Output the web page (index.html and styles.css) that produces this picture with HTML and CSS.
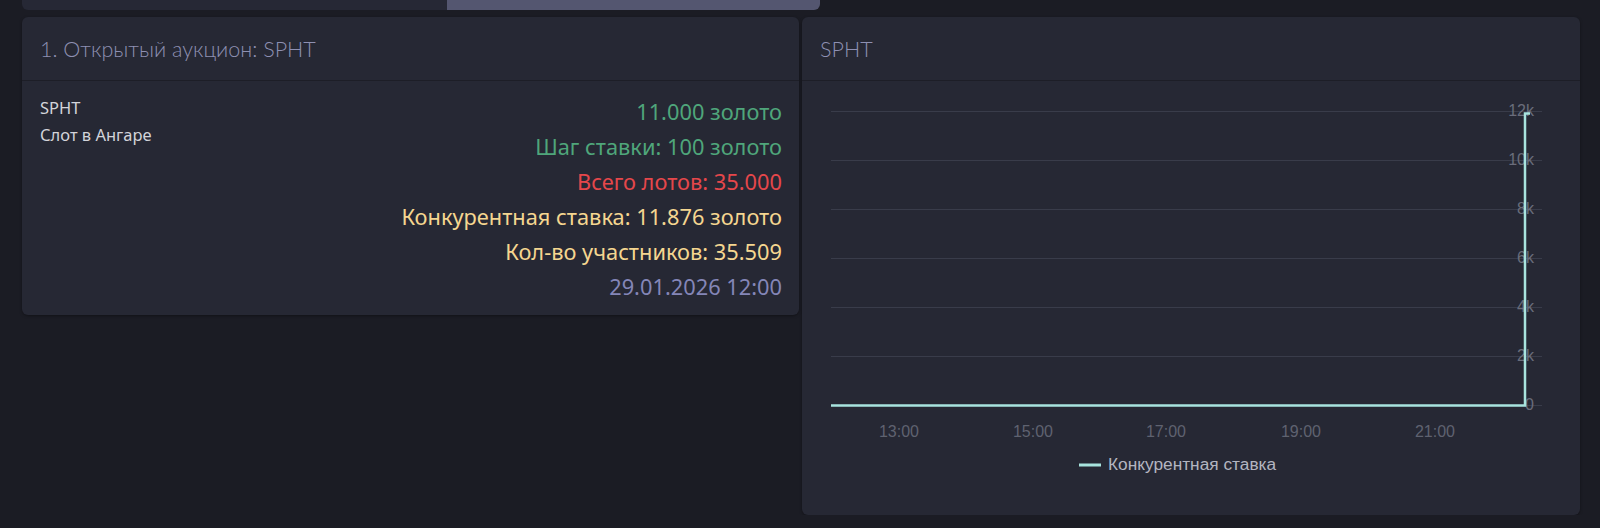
FILE: index.html
```html
<!DOCTYPE html>
<html lang="ru">
<head>
<meta charset="utf-8">
<title>Аукцион SPHT</title>
<link rel="stylesheet" href="styles.css">
</head>
<body>
<div class="page">
  <div class="topbar">
    <div class="topbar-seg topbar-seg-a"></div>
    <div class="topbar-seg topbar-seg-b"></div>
  </div>
  <div class="row">
    <section class="card card-lot">
      <header class="card-head">1. Открытый аукцион: SPHT</header>
      <div class="lot-body">
        <div class="lot-name">
          <div class="lot-code">SPHT</div>
          <div class="lot-desc">Слот в Ангаре</div>
        </div>
        <div class="lot-stats">
          <div class="stat stat-green">11.000 золото</div>
          <div class="stat stat-green">Шаг ставки: 100 золото</div>
          <div class="stat stat-red">Всего лотов: 35.000</div>
          <div class="stat stat-yellow">Конкурентная ставка: 11.876 золото</div>
          <div class="stat stat-yellow">Кол-во участников: 35.509</div>
          <div class="stat stat-date">29.01.2026 12:00</div>
        </div>
      </div>
    </section>
    <section class="card card-chart">
      <header class="card-head">SPHT</header>
      <div class="chart-body">
        <svg class="chart" width="778" height="434" viewBox="0 0 778 434">
          <g class="grid">
            <line x1="29" y1="30.5" x2="740" y2="30.5"/>
            <line x1="29" y1="79.5" x2="740" y2="79.5"/>
            <line x1="29" y1="128.5" x2="740" y2="128.5"/>
            <line x1="29" y1="177.5" x2="740" y2="177.5"/>
            <line x1="29" y1="226.5" x2="740" y2="226.5"/>
            <line x1="29" y1="275.5" x2="740" y2="275.5"/>
            <line x1="29" y1="324.5" x2="740" y2="324.5"/>
          </g>
          <g class="ylabels">
            <text x="732" y="30.5">12k</text>
            <text x="732" y="79.5">10k</text>
            <text x="732" y="128.5">8k</text>
            <text x="732" y="177.5">6k</text>
            <text x="732" y="226.5">4k</text>
            <text x="732" y="275.5">2k</text>
            <text x="732" y="324.5">0</text>
          </g>
          <polyline class="series" points="29,324.5 723,324.5 723,32.5 728,32.5"/>
          <g class="xlabels">
            <text x="97" y="352">13:00</text>
            <text x="231" y="352">15:00</text>
            <text x="364" y="352">17:00</text>
            <text x="499" y="352">19:00</text>
            <text x="633" y="352">21:00</text>
          </g>
          <g class="legend">
            <line class="legend-swatch" x1="277" y1="384" x2="299" y2="384"/>
            <text x="306" y="384">Конкурентная ставка</text>
          </g>
        </svg>
      </div>
    </section>
  </div>
</div>
</body>
</html>
```
FILE: styles.css
```css
html, body {
  margin: 0;
  padding: 0;
  background: #1b1c24;
}

body {
  font-family: "Noto Sans", "Open Sans", sans-serif;
  color: #d2d3da;
}

.page {
  padding: 0 20px 0 22px;
}

.topbar {
  display: flex;
  width: 798px;
  height: 10px;
}

.topbar-seg-a {
  width: 425px;
  background: #262835;
  border-radius: 0 0 0 6px;
}

.topbar-seg-b {
  flex: 1;
  background: #545670;
  border-radius: 0 0 6px 0;
}

.row {
  display: flex;
  align-items: flex-start;
  gap: 3px;
  margin-top: 7px;
}

.card {
  background: #262834;
  border-radius: 6px;
  box-shadow: 0 1px 3px rgba(0, 0, 0, 0.35);
}

.card-lot {
  width: 777px;
}

.card-chart {
  flex: 1;
  height: 498px;
}

.card-head {
  height: 63px;
  border-bottom: 1px solid #1d1e27;
  display: flex;
  align-items: center;
  padding-left: 18px;
  font-family: "Lato", "Roboto", sans-serif;
  font-weight: 300;
  font-size: 21.5px;
  color: #8e90b2;
}

.lot-body {
  display: flex;
  justify-content: space-between;
  padding: 13px 17px 11px 18px;
}

.lot-name {
  font-size: 16.5px;
  line-height: 27px;
  color: #d3d4da;
}

.lot-stats {
  text-align: right;
  font-size: 21.8px;
  line-height: 35px;
}

.stat-green { color: #4fa67b; }
.stat-red { color: #e5474b; }
.stat-yellow { color: #f5d690; }
.stat-date { color: #8486b8; }

.chart {
  display: block;
  font-family: "Liberation Sans", Arial, sans-serif;
}

.grid line {
  stroke: #393c4a;
  stroke-width: 1;
}

.ylabels text {
  fill: #6a6d7b;
  font-size: 16px;
  text-anchor: end;
  dominant-baseline: middle;
}

.xlabels text {
  fill: #5f6270;
  font-size: 16px;
  text-anchor: middle;
  dominant-baseline: middle;
}

.series {
  fill: none;
  stroke: #a8e4de;
  stroke-width: 2.5;
  stroke-linejoin: miter;
}

.legend-swatch {
  stroke: #a8e4de;
  stroke-width: 3;
}

.legend text {
  fill: #b3b5c0;
  font-size: 17.3px;
  dominant-baseline: middle;
}
```
